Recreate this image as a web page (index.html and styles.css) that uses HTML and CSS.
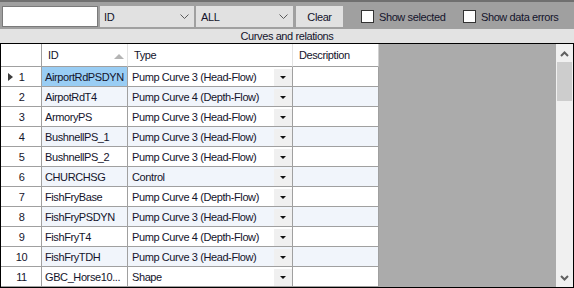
FILE: index.html
```html
<!DOCTYPE html>
<html>
<head>
<meta name="viewport" content="width=device-width, initial-scale=1.0">
<link rel="stylesheet" href="styles.css">
</head>
<body>

<div class="toolbar">
  <div class="search"></div>
  <div class="combo combo-field">
    <span>ID</span>
    <svg class="chev" width="9" height="5" viewBox="0 0 9 5"><polyline points="0.5,0.5 4.5,4.5 8.5,0.5" fill="none" stroke="#5a5a5a" stroke-width="1"/></svg>
  </div>
  <div class="combo combo-filter">
    <span>ALL</span>
    <svg class="chev" width="9" height="5" viewBox="0 0 9 5"><polyline points="0.5,0.5 4.5,4.5 8.5,0.5" fill="none" stroke="#5a5a5a" stroke-width="1"/></svg>
  </div>
  <div class="btn">Clear</div>
  <div class="check check-selected"><span class="box"></span>Show selected</div>
  <div class="check check-errors"><span class="box"></span>Show data errors</div>
</div>

<div class="caption">Curves and relations</div>

<div class="grid">
  <div class="sheet">
    <div class="row head">
      <div class="cell ind"></div>
      <div class="cell id">ID<span class="sort"></span></div>
      <div class="cell type">Type</div>
      <div class="cell desc">Description</div>
    </div>

    <div class="row">
      <div class="cell ind"><span class="cur"></span>1</div>
      <div class="cell id selected">AirportRdPSDYN</div>
      <div class="cell type"><span class="txt">Pump Curve 3 (Head-Flow)</span><span class="drop"></span></div>
      <div class="cell desc"></div>
    </div>
    <div class="row alt">
      <div class="cell ind">2</div>
      <div class="cell id">AirpotRdT4</div>
      <div class="cell type"><span class="txt">Pump Curve 4 (Depth-Flow)</span><span class="drop"></span></div>
      <div class="cell desc"></div>
    </div>
    <div class="row">
      <div class="cell ind">3</div>
      <div class="cell id">ArmoryPS</div>
      <div class="cell type"><span class="txt">Pump Curve 3 (Head-Flow)</span><span class="drop"></span></div>
      <div class="cell desc"></div>
    </div>
    <div class="row alt">
      <div class="cell ind">4</div>
      <div class="cell id">BushnellPS_1</div>
      <div class="cell type"><span class="txt">Pump Curve 3 (Head-Flow)</span><span class="drop"></span></div>
      <div class="cell desc"></div>
    </div>
    <div class="row">
      <div class="cell ind">5</div>
      <div class="cell id">BushnellPS_2</div>
      <div class="cell type"><span class="txt">Pump Curve 3 (Head-Flow)</span><span class="drop"></span></div>
      <div class="cell desc"></div>
    </div>
    <div class="row alt">
      <div class="cell ind">6</div>
      <div class="cell id">CHURCHSG</div>
      <div class="cell type"><span class="txt">Control</span><span class="drop"></span></div>
      <div class="cell desc"></div>
    </div>
    <div class="row">
      <div class="cell ind">7</div>
      <div class="cell id">FishFryBase</div>
      <div class="cell type"><span class="txt">Pump Curve 4 (Depth-Flow)</span><span class="drop"></span></div>
      <div class="cell desc"></div>
    </div>
    <div class="row alt">
      <div class="cell ind">8</div>
      <div class="cell id">FishFryPSDYN</div>
      <div class="cell type"><span class="txt">Pump Curve 3 (Head-Flow)</span><span class="drop"></span></div>
      <div class="cell desc"></div>
    </div>
    <div class="row">
      <div class="cell ind">9</div>
      <div class="cell id">FishFryT4</div>
      <div class="cell type"><span class="txt">Pump Curve 4 (Depth-Flow)</span><span class="drop"></span></div>
      <div class="cell desc"></div>
    </div>
    <div class="row alt">
      <div class="cell ind">10</div>
      <div class="cell id">FishFryTDH</div>
      <div class="cell type"><span class="txt">Pump Curve 3 (Head-Flow)</span><span class="drop"></span></div>
      <div class="cell desc"></div>
    </div>
    <div class="row">
      <div class="cell ind">11</div>
      <div class="cell id">GBC_Horse10...</div>
      <div class="cell type"><span class="txt">Shape</span><span class="drop"></span></div>
      <div class="cell desc"></div>
    </div>
  </div>

  <div class="vscroll">
    <svg class="arrow" width="9" height="6" viewBox="0 0 9 6"><polyline points="1,5 4.5,1.5 8,5" fill="none" stroke="#606060" stroke-width="2"/></svg>
    <div class="thumb"></div>
    <div class="track"></div>
    <svg class="arrow" width="9" height="6" viewBox="0 0 9 6"><polyline points="1,1 4.5,4.5 8,1" fill="none" stroke="#606060" stroke-width="2"/></svg>
  </div>
</div>

</body>
</html>
```

FILE: styles.css
```css
body {
  margin: 0;
  width: 574px;
  height: 288px;
  overflow: hidden;
  font-family: "Liberation Sans", Arial, sans-serif;
  font-size: 11px;
  letter-spacing: -0.4px;
  color: #14142c;
  background: #ababab;
}

/* top filter bar */
.toolbar {
  height: 29px;
  box-sizing: border-box;
  border-top: 2px solid #707070;
  background: #a0a0a0;
  display: flex;
  align-items: flex-start;
  padding: 4px 0 0 2px;
  white-space: nowrap;
}

.toolbar > div { flex-shrink: 0; }

.search {
  width: 96px;
  height: 21px;
  box-sizing: border-box;
  background: #fff;
  border: 1px solid #7a7a7a;
  margin-right: 2px;
}

.combo {
  height: 21px;
  box-sizing: border-box;
  background: #e1e1e1;
  display: flex;
  align-items: center;
  justify-content: space-between;
  padding: 0 5px 0 4px;
}

.combo-field { width: 94px; margin-right: 2px; }
.combo-filter { width: 97px; padding-left: 5px; margin-right: 3px; }

.chev { display: block; }

.btn {
  width: 47px;
  height: 21px;
  box-sizing: border-box;
  background: #e1e1e1;
  display: flex;
  align-items: center;
  justify-content: center;
}

.check {
  display: flex;
  align-items: center;
  height: 21px;
}

.check-selected { width: 102px; margin-left: 18px; }

.check .box {
  width: 13px;
  height: 13px;
  box-sizing: border-box;
  background: #fff;
  border: 1px solid #333;
  margin-right: 5px;
}

.caption {
  height: 14px;
  line-height: 14px;
  background: #e3e3e3;
  text-align: center;
}

/* grid */
.grid {
  height: 245px;
  box-sizing: border-box;
  border: 1px solid #000;
  display: flex;
}

.sheet {
  flex: 1;
  background: #ababab;
}

.row {
  display: flex;
  height: 20px;
  width: 378px;
}

.cell {
  box-sizing: border-box;
  height: 100%;
  border-right: 1px solid #a0a0a0;
  border-bottom: 1px solid #a0a0a0;
  background: #fff;
  display: flex;
  align-items: center;
  white-space: nowrap;
  overflow: hidden;
  position: relative;
  flex-shrink: 0;
}

.ind { width: 41px; justify-content: center; padding-left: 1px; }
.id { width: 86px; padding-left: 3px; }
.type { width: 165px; padding-left: 4px; }
.desc { width: 86px; }

.alt .id,
.alt .type,
.alt .desc { background: #f1f5fb; }

.id.selected { background: #99cdf4; }

.head { height: 23px; }
.head .cell { padding-left: 6px; border-right-color: #e3e3e3; }
.head .ind { border-right-color: #a0a0a0; }
.head .desc { border-right-color: #d0d0d0; }

.sort {
  position: absolute;
  right: 3px;
  top: 10px;
  width: 0;
  height: 0;
  border-left: 5px solid transparent;
  border-right: 5px solid transparent;
  border-bottom: 5px solid #b4b4b4;
}

.cur {
  position: absolute;
  left: 7px;
  top: 6px;
  width: 0;
  height: 0;
  border-top: 4px solid transparent;
  border-bottom: 4px solid transparent;
  border-left: 5px solid #3c3c3c;
}

.type .txt { flex: 1; }

.drop {
  width: 18px;
  height: 17px;
  margin-top: 1px;
  background: #f0f0f0;
  display: flex;
  align-items: center;
  justify-content: center;
}

.drop::after {
  content: "";
  width: 0;
  height: 0;
  border-left: 3px solid transparent;
  border-right: 3px solid transparent;
  border-top: 3px solid #111;
}

/* scrollbar */
.vscroll {
  width: 17px;
  background: #f0f0f0;
  display: flex;
  flex-direction: column;
  align-items: center;
}

.arrow { display: block; margin: 7px 0 5px; }
.vscroll .arrow:last-child { margin: 0 0 6px; }

.thumb {
  width: 15px;
  height: 39px;
  background: #cdcdcd;
}

.track { flex: 1; }
```
